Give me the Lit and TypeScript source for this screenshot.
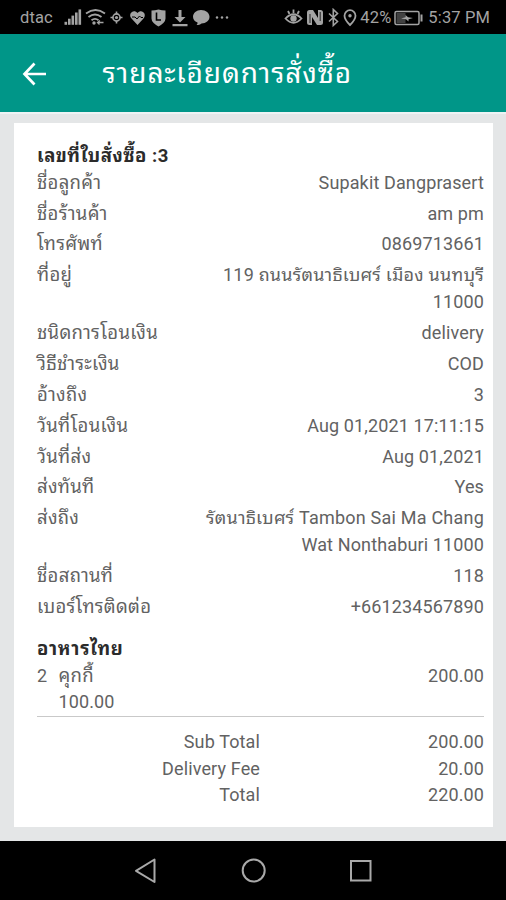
import { LitElement, html, css, svg } from "lit";
import { customElement } from "lit/decorators.js";

interface Detail {
  label: string;
  lines: string[];
}

const details: Detail[] = [
  { label: "ชื่อลูกค้า", lines: ["Supakit Dangprasert"] },
  { label: "ชื่อร้านค้า", lines: ["am pm"] },
  { label: "โทรศัพท์", lines: ["0869713661"] },
  { label: "ที่อยู่", lines: ["119 ถนนรัตนาธิเบศร์ เมือง นนทบุรี", "11000"] },
  { label: "ชนิดการโอนเงิน", lines: ["delivery"] },
  { label: "วิธีชำระเงิน", lines: ["COD"] },
  { label: "อ้างถึง", lines: ["3"] },
  { label: "วันที่โอนเงิน", lines: ["Aug 01,2021 17:11:15"] },
  { label: "วันที่ส่ง", lines: ["Aug 01,2021"] },
  { label: "ส่งทันที", lines: ["Yes"] },
  { label: "ส่งถึง", lines: ["รัตนาธิเบศร์ Tambon Sai Ma Chang", "Wat Nonthaburi 11000"] },
  { label: "ชื่อสถานที่", lines: ["118"] },
  { label: "เบอร์โทรติดต่อ", lines: ["+661234567890"] },
];

const totals = [
  ["Sub Total", "200.00"],
  ["Delivery Fee", "20.00"],
  ["Total", "220.00"],
];

const hasThai = (text: string) => /[\u0e00-\u0e7f]/.test(text);

@customElement("status-bar")
class StatusBar extends LitElement {
  static styles = css`
    :host { display: flex; height: 34px; background: #000; color: #a3a3a3; font: 16.5px/34px Roboto, sans-serif; align-items: center; justify-content: space-between; padding: 1px 16px 0 20px; box-sizing: border-box; }
    .side { display: flex; align-items: center; }
    .carrier { width: 44px; }
    .time { margin-left: 4px; }
    svg { display: block; fill: currentColor; flex: none; }
    .line { fill: none; stroke: currentColor; }
    .cut { fill: none; stroke: #000; }
  `;
  render() {
    return html`
      <div class="side">
        <span class="carrier">dtac</span>
        <svg width="168" height="20" viewBox="64 8 168 20">
          ${[0, 1, 2, 3, 4].map((i) => svg`<rect x=${64.5 + i * 3.5} y=${21.8 - i * 3.1} width="2.6" height=${3 + i * 3.1} />`)}
          <g class="line" stroke-width="1.8">
            <path d="M86 13.500q9.500-7 19 0M88.500 17q6.500-5 13 0M91.500 20.200q3.500-2.700 7 0" />
            <path d="M97.500 22.500h6M100 20.500l-2.500 2 2 2" stroke-width="1.300" />
            <circle cx="116.500" cy="17.500" r="3.600" stroke-width="1.600" />
            <path d="M116.500 11.500v3M116.500 20.500v3M110.500 17.500h3M119.500 17.500h3" stroke-width="1.600" />
          </g>
          <circle cx="94" cy="23" r="1.700" />
          <circle cx="116.500" cy="17.500" r="1.600" />
          <path d="M137.500 25l-6-6.500c-4-4.500 2-10 6-5.500 4-4.500 10 1 6 5.500z" />
          <path class="cut" d="M132 17h3l2 2 2.500-3 1.500 1.500h2" stroke-width="1" />
          <path d="M151.500 10.500q3.500 0 7-1 3.500 1 7 1v8q0 4-7 8-7-4-7-8z" />
          <path class="cut" d="M156.500 12.500v7.500h4.500" stroke-width="1.600" />
          <path d="M178.500 10h3v7h4l-5.500 5.500-5.500-5.500h4zM172.500 24h15v2.200h-15z" />
          <path d="M201 10c5 0 8.500 3 8.500 6.800s-3.500 6.700-8 6.700c-1.500 1.300-3.500 1.600-5 1.500.8-.7 1.200-1.600 1-2.500-3-1-4.500-3.200-4.500-5.700 0-3.800 3.500-6.800 8-6.800z" />
          <circle cx="217" cy="17.500" r="1.200" /><circle cx="222" cy="17.500" r="1.200" /><circle cx="227" cy="17.500" r="1.200" />
        </svg>
      </div>
      <div class="side">
        <svg width="76" height="20" viewBox="284 8 76 20">
          <g class="line" stroke-width="1.800">
            <path d="M285.500 18.500q8-8.500 16 0-8 8.500-16 0z" />
            <path d="M293.500 9.500v3.500M288 11l1.500 3M299 11l-1.500 3" />
            <path d="M329 13.500l8.500 8-4.200 4v-16l4.200 4-8.500 8" stroke-width="1.600" />
            <path d="M350 25q-5.500-5.500-5.500-9.300a5.500 5.500 0 0 1 11 0q0 3.800-5.500 9.300z" />
          </g>
          <circle cx="293.500" cy="18.500" r="3.200" />
          <path d="M309.500 10h3.500l5 8v-8h2.500q2.500 0 2.500 2.500v10q0 2.500-2.500 2.500h-3.500l-5-8v8h-2.500q-2.500 0-2.500-2.500v-10q0-2.500 2.500-2.500z" />
          <path class="cut" d="M310 14v9M320.200 12v9" stroke-width=".8" />
          <circle cx="350" cy="15.800" r="1.700" />
        </svg>
        <span>42%</span>
        <svg width="33" height="20" viewBox="391.500 8 33 20">
          <rect class="line" x="395.500" y="11.500" width="24" height="13" rx="1.500" stroke-width="1.500" />
          <rect x="397" y="13" width="9" height="10" opacity=".4" />
          <path d="M401.500 18.500l4.500-1.200v-2.300l2.500 2.200 5 .8-4.500 1.200v2.300l-2.500-2.200z" />
          <rect x="421" y="14.500" width="2" height="7" />
        </svg>
        <span class="time">5:37 PM</span>
      </div>`;
  }
}

@customElement("app-root")
class AppRoot extends LitElement {
  static styles = css`
    :host { display: flex; flex-direction: column; height: 900px; overflow: hidden; background: #e4e6e7; font-family: Roboto, "Noto Sans Thai Looped", "Loma", "Garuda", "Waree", "Noto Sans Thai", sans-serif; font-size: 18px; line-height: 26.700px; letter-spacing: 0.130px; color: #626262; }
    .appbar { flex: none; height: 78px; box-sizing: border-box; background: #009688; color: #fff; display: flex; align-items: center; padding: 2px 0 0 20px; box-shadow: 0 2px 0 #edf3f4; }
    .back { width: 82.500px; flex: none; }
    .back svg { display: block; fill: none; stroke: #fff; stroke-width: 2.700; }
    h1 { margin: 0; font-size: 28px; font-weight: 400; line-height: 40px; letter-spacing: 0.900px; white-space: nowrap; }
    .card { flex: none; margin: 10.500px 13.500px 0 14px; height: 704.500px; box-sizing: border-box; background: #fff; padding: 20.500px 8.500px 0 23px; }
    h2 { margin: 0; font-size: 18.500px; line-height: 26.700px; letter-spacing: 0.500px; font-weight: 700; color: #2b2b2b; white-space: nowrap; }
    .row { display: flex; justify-content: space-between; padding-bottom: 4.200px; }
    .row span { white-space: nowrap; }
    .label, .name { font-size: 18.500px; letter-spacing: 0.300px; }
    .value { text-align: right; }
    .value span { display: block; }
    .value .thai { letter-spacing: 0.220px; }
    .group { margin-top: 11.200px; letter-spacing: 0.750px; }
    .item { display: grid; grid-template-columns: 21.500px 1fr auto; }
    .rule { height: 1px; background: #c9c9c9; margin: 0 0 12px; }
    .total { display: grid; grid-template-columns: 223px 1fr; text-align: right; }
    .nav { margin-top: auto; flex: none; height: 59px; background: #000; display: flex; justify-content: center; }
    .nav svg { display: block; fill: none; stroke: #a9a9a9; stroke-width: 2; }
  `;
  render() {
    return html`
      <status-bar></status-bar>
      <header class="appbar">
        <div class="back"><svg width="28" height="28" viewBox="0 0 28 28"><path d="M26 14H5M14.500 3.500L4.500 14l10 10.500" /></svg></div>
        <h1>รายละเอียดการสั่งซื้อ</h1>
      </header>
      <main class="card">
        <h2>เลขที่ใบสั่งซื้อ :3</h2>
        ${details.map((d) => html`<div class="row"><span class="label">${d.label}</span><div class="value">${d.lines.map((l) => html`<span class=${hasThai(l) ? "thai" : "latin"}>${l}</span>`)}</div></div>`)}
        <h2 class="group">อาหารไทย</h2>
        <div class="item"><span>2</span><div><span class="name">คุกกี้</span><br />100.00</div><span>200.00</span></div>
        <div class="rule"></div>
        ${totals.map(([k, v]) => html`<div class="total"><span>${k}</span><span>${v}</span></div>`)}
      </main>
      <nav class="nav">
        <svg width="260" height="59" viewBox="123 841 260 59">
          <path d="M154.500 859.500v22.500l-18.500-11.200z" stroke-linejoin="round" />
          <circle cx="253.700" cy="870.500" r="11" />
          <rect x="351" y="861" width="19.500" height="19.500" />
        </svg>
      </nav>`;
  }
}
